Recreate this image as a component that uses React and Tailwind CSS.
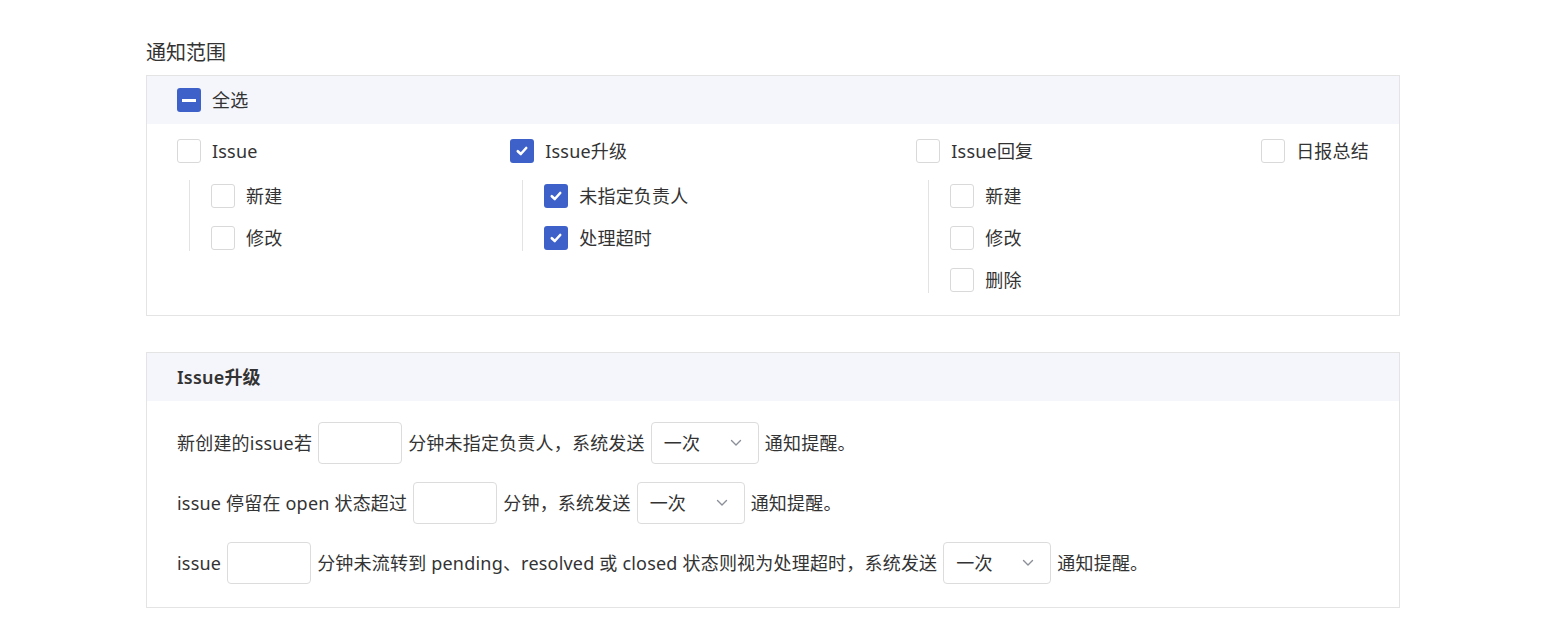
import React from "react";

const FONT = { fontFamily: '"Noto Sans", "Noto Sans CJK SC", sans-serif' };

function Box({ state }) {
  if (state === "checked") {
    return (
      <span className="w-[24px] h-[24px] rounded-[3px] bg-[#3d61c9] flex items-center justify-center shrink-0">
        <svg width="14" height="14" viewBox="0 0 14 14">
          <path d="M2.8 7.2 L5.8 10 L11.2 4" fill="none" stroke="#fff" strokeWidth="2.6" strokeLinecap="round" strokeLinejoin="round" />
        </svg>
      </span>
    );
  }
  if (state === "indeterminate") {
    return (
      <span className="w-[24px] h-[24px] rounded-[3px] bg-[#3d61c9] flex items-center justify-center shrink-0">
        <span className="w-[14px] h-[3px] bg-white" />
      </span>
    );
  }
  return <span className="w-[24px] h-[24px] rounded-[3px] border border-[#d9d9d9] bg-white shrink-0" />;
}

function Item({ label, state }) {
  return (
    <div className="flex items-center h-[24px]">
      <Box state={state} />
      <span className="ml-[11px] text-[18px] leading-[24px] text-[#333] whitespace-nowrap tracking-[0.2px]">{label}</span>
    </div>
  );
}

function Group({ label, state, subs }) {
  return (
    <div className="flex flex-col">
      <Item label={label} state={state} />
      {subs && (
        <div className="mt-[17px] ml-[12px] border-l border-[#e3e3e3] pl-[21px] pt-[4px] pb-[1px] flex flex-col gap-[18px]">
          {subs.map((s) => (
            <Item key={s.label} label={s.label} state={s.state} />
          ))}
        </div>
      )}
    </div>
  );
}

function Input() {
  return <span className="inline-block w-[84px] h-[42px] border border-[#dcdcdc] rounded-[4px] bg-white mx-[6px] shrink-0" />;
}

function Select() {
  return (
    <span className="inline-flex items-center justify-between w-[108px] h-[42px] border border-[#dcdcdc] rounded-[4px] bg-white mx-[6px] pl-[12px] pr-[16px] shrink-0">
      <span className="text-[18px] text-[#333]">一次</span>
      <svg width="12" height="8" viewBox="0 0 12 8">
        <path d="M1.5 1.5 L6 6 L10.5 1.5" fill="none" stroke="#8a8f99" strokeWidth="1.4" strokeLinecap="round" strokeLinejoin="round" />
      </svg>
    </span>
  );
}

function Row({ children }) {
  return <div className="flex items-center h-[42px] text-[18px] text-[#333] whitespace-nowrap tracking-[0.2px]">{children}</div>;
}

export default function App() {
  return (
    <div className="min-h-[644px] bg-white pl-[146px] pt-[39px]" style={FONT}>
      <div className="text-[20px] leading-[28px] text-[#333] mb-[8px]">通知范围</div>
      <div className="w-[1254px] border border-[#e4e4e4]">
        <div className="h-[48px] bg-[#f5f6fb] flex items-center px-[30px]">
          <Item label="全选" state="indeterminate" />
        </div>
        <div className="px-[30px] pt-[15px] pb-[22px] flex justify-between items-start">
          <Group
            label="Issue"
            state="empty"
            subs={[
              { label: "新建", state: "empty" },
              { label: "修改", state: "empty" },
            ]}
          />
          <Group
            label="Issue升级"
            state="checked"
            subs={[
              { label: "未指定负责人", state: "checked" },
              { label: "处理超时", state: "checked" },
            ]}
          />
          <Group
            label="Issue回复"
            state="empty"
            subs={[
              { label: "新建", state: "empty" },
              { label: "修改", state: "empty" },
              { label: "删除", state: "empty" },
            ]}
          />
          <Group label="日报总结" state="empty" />
        </div>
      </div>

      <div className="w-[1254px] border border-[#e4e4e4] mt-[36px]">
        <div className="h-[48px] bg-[#f5f6fb] flex items-center px-[30px]">
          <span className="text-[18px] font-semibold text-[#333] tracking-[0.2px]">Issue升级</span>
        </div>
        <div className="px-[30px] pt-[21px] pb-[23px] flex flex-col gap-[18px]">
          <Row>
            <span>新创建的issue若</span>
            <Input />
            <span>分钟未指定负责人，系统发送</span>
            <Select />
            <span>通知提醒。</span>
          </Row>
          <Row>
            <span>issue 停留在 open 状态超过</span>
            <Input />
            <span>分钟，系统发送</span>
            <Select />
            <span>通知提醒。</span>
          </Row>
          <Row>
            <span>issue</span>
            <Input />
            <span>分钟未流转到 pending、resolved 或 closed 状态则视为处理超时，系统发送</span>
            <Select />
            <span>通知提醒。</span>
          </Row>
        </div>
      </div>
    </div>
  );
}
